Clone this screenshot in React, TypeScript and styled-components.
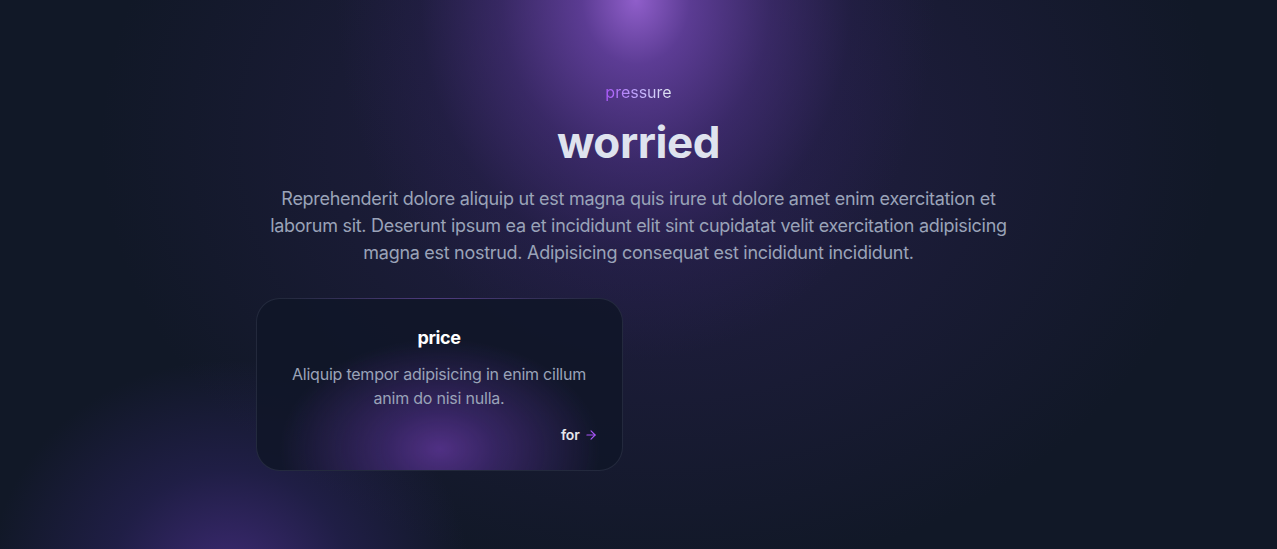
import React from 'react'
import styled, { createGlobalStyle } from 'styled-components'

const GlobalStyle = createGlobalStyle`
  html, body {
    margin: 0;
    padding: 0;
    background: #111827;
  }
  body {
    font-family: Inter, "Noto Sans", sans-serif;
    -webkit-font-smoothing: antialiased;
  }
  * { box-sizing: border-box; }
`

const Page = styled.section`
  min-height: 549px;
  display: flex;
  flex-direction: column;
  align-items: center;
  padding-top: 80px;
  background:
    radial-gradient(ellipse 300px 360px at 636px 0px,
      rgba(150, 98, 210, 0.95) 0%,
      rgba(112, 70, 176, 0.75) 18%,
      rgba(82, 52, 140, 0.5) 45%,
      rgba(50, 36, 96, 0.25) 72%,
      rgba(17, 24, 39, 0) 100%),
    radial-gradient(ellipse 560px 440px at 660px 140px,
      rgba(60, 40, 110, 0.45) 0%,
      rgba(17, 24, 39, 0) 100%),
    radial-gradient(ellipse 240px 220px at 230px 580px,
      rgba(72, 46, 134, 0.8) 0%,
      rgba(46, 36, 100, 0.5) 50%,
      rgba(17, 24, 39, 0) 100%),
    #111827;
`

const Eyebrow = styled.span`
  font-size: 16px;
  line-height: 24px;
  background: linear-gradient(90deg, #a855f7 0%, #c4b5fd 55%, #e2e8f0 100%);
  -webkit-background-clip: text;
  background-clip: text;
  color: transparent;
`

const Heading = styled.h2`
  margin: 12px 0 0;
  font-size: 44px;
  line-height: 52px;
  font-weight: 700;
  letter-spacing: -0.01em;
  color: #dfe3ee;
`

const Lead = styled.p`
  margin: 17px 0 0;
  max-width: 768px;
  padding: 0 12px;
  text-align: center;
  font-size: 18px;
  line-height: 27px;
  letter-spacing: -0.016em;
  color: #9aa3b8;
`

const Grid = styled.div`
  margin-top: 32px;
  width: 768px;
  display: grid;
  grid-template-columns: repeat(2, 367px);
  gap: 34px;
  padding-left: 1px;
`

const Card = styled.article`
  height: 173px;
  border-radius: 24px;
  border: 1px solid rgba(148, 163, 184, 0.14);
  padding: 25px 24px 24px;
  display: flex;
  flex-direction: column;
  align-items: center;
  text-align: center;
  letter-spacing: -0.014em;
  background:
    radial-gradient(ellipse 160px 110px at 183px 150px,
      rgba(80, 48, 132, 1) 0%,
      rgba(66, 42, 116, 0.75) 35%,
      rgba(17, 22, 40, 0) 100%),
    rgba(16, 22, 40, 0.88);
`

const CardTitle = styled.h3`
  margin: 0;
  font-size: 18px;
  line-height: 28px;
  font-weight: 700;
  letter-spacing: -0.02em;
  color: #ffffff;
`

const CardText = styled.p`
  margin: 10px 0 0;
  font-size: 16px;
  line-height: 24px;
  color: #9aa3b8;
`

const CardLink = styled.a`
  margin-top: 15px;
  align-self: flex-end;
  display: inline-flex;
  align-items: center;
  gap: 4px;
  font-size: 14px;
  line-height: 20px;
  font-weight: 600;
  color: #e5e7eb;
  text-decoration: none;
`

const Arrow = styled.svg`
  width: 14px;
  height: 14px;
  color: #a855f7;
`

export default function App() {
  return (
    <>
      <GlobalStyle />
      <Page>
        <Eyebrow>pressure</Eyebrow>
        <Heading>worried</Heading>
        <Lead>
          Reprehenderit dolore aliquip ut est magna quis irure ut dolore amet enim exercitation et
          laborum sit. Deserunt ipsum ea et incididunt elit sint cupidatat velit exercitation adipisicing
          magna est nostrud. Adipisicing consequat est incididunt incididunt.
        </Lead>
        <Grid>
          <Card>
            <CardTitle>price</CardTitle>
            <CardText>Aliquip tempor adipisicing in enim cillum anim do nisi nulla.</CardText>
            <CardLink href="#">
              for
              <Arrow viewBox="0 0 24 24" fill="none" stroke="currentColor" strokeWidth="2" strokeLinecap="round" strokeLinejoin="round">
                <path d="M5 12h14" />
                <path d="m12 5 7 7-7 7" />
              </Arrow>
            </CardLink>
          </Card>
        </Grid>
      </Page>
    </>
  )
}
